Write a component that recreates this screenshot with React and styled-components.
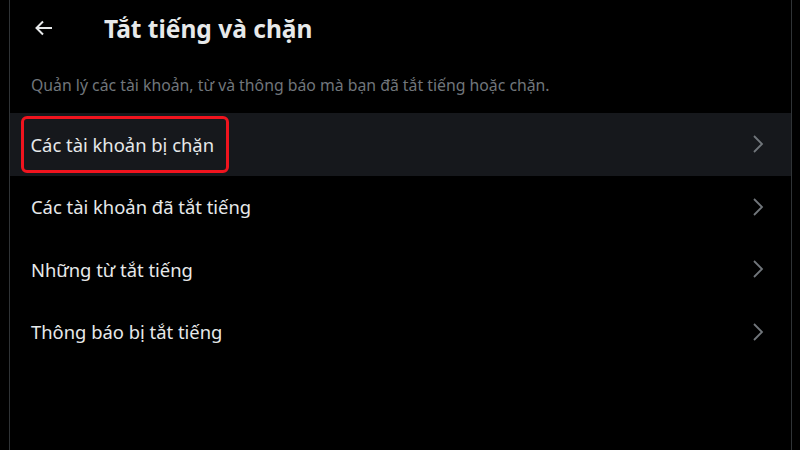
import React from 'react';
import styled, { createGlobalStyle } from 'styled-components';

const GlobalStyle = createGlobalStyle`
  html, body {
    margin: 0;
    padding: 0;
    background: #000;
  }
  body {
    font-family: "Noto Sans", "Open Sans", "Liberation Sans", sans-serif;
    color: #e7e9ea;
  }
`;

const Page = styled.div`
  width: 800px;
  height: 450px;
  background: #000;
  overflow: hidden;
`;

const Panel = styled.div`
  margin-left: 9px;
  width: 781px;
  height: 450px;
  border-left: 1px solid #2f3336;
  border-right: 1px solid #2f3336;
  display: flex;
  flex-direction: column;
`;

const Header = styled.div`
  height: 56px;
  display: flex;
  align-items: center;
  padding-left: 25px;
`;

const BackButton = styled.button`
  width: 18px;
  height: 18px;
  padding: 0;
  border: none;
  background: transparent;
  color: #e7e9ea;
  display: flex;
  align-items: center;
  justify-content: center;
  cursor: pointer;
  margin-right: 51px;
`;

const Title = styled.h1`
  margin: 0;
  font-size: 24.5px;
  font-weight: 700;
  color: #e7e9ea;
`;

const Description = styled.p`
  margin: 0;
  padding: 0 21px;
  height: 57px;
  display: flex;
  align-items: center;
  font-size: 15.8px;
  color: #71767b;
`;

const List = styled.div`
  display: flex;
  flex-direction: column;
`;

const Row = styled.div`
  height: 62.5px;
  display: flex;
  align-items: center;
  justify-content: space-between;
  padding: 0 27px 0 21px;
  background: ${(p) => (p.$active ? '#16181c' : 'transparent')};
  cursor: pointer;
`;

const Label = styled.span`
  font-size: 18.4px;
  color: #e7e9ea;
  ${(p) =>
    p.$marked &&
    `
    border: 3.5px solid #f0141e;
    border-radius: 6px;
    padding: 13px 12px 13px 7px;
    margin: -16.5px -15.5px -16.5px -10.5px;
  `}
`;

const Chevron = () => (
  <svg width="12" height="20" viewBox="0 0 12 20" fill="none">
    <path d="M2 2 L10 10 L2 18" stroke="#71767b" strokeWidth="1.8" />
  </svg>
);

const items = [
  { label: 'Các tài khoản bị chặn', active: true, marked: true },
  { label: 'Các tài khoản đã tắt tiếng' },
  { label: 'Những từ tắt tiếng' },
  { label: 'Thông báo bị tắt tiếng' },
];

const App = () => {
  return (
    <Page>
      <GlobalStyle />
      <Panel>
        <Header>
          <BackButton aria-label="Quay lại">
            <svg width="18" height="16" viewBox="0 0 18 16" fill="none">
              <path
                d="M17 8 H2 M8 1.5 L1.5 8 L8 14.5"
                stroke="#e7e9ea"
                strokeWidth="2"
              />
            </svg>
          </BackButton>
          <Title>Tắt tiếng và chặn</Title>
        </Header>
        <Description>
          Quản lý các tài khoản, từ và thông báo mà bạn đã tắt tiếng hoặc chặn.
        </Description>
        <List>
          {items.map((item) => (
            <Row key={item.label} $active={item.active}>
              <Label $marked={item.marked}>{item.label}</Label>
              <Chevron />
            </Row>
          ))}
        </List>
      </Panel>
    </Page>
  );
};

export default App;
